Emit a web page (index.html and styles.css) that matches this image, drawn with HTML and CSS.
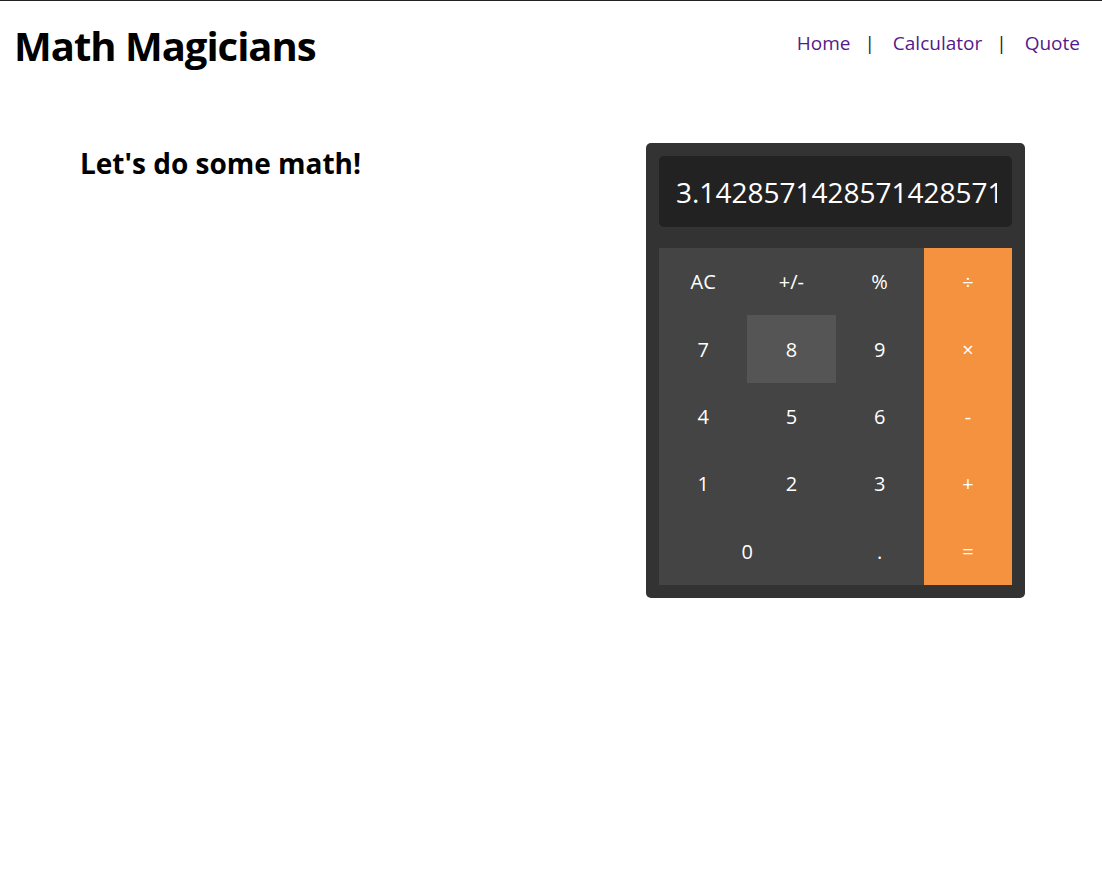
FILE: index.html
```html
<!DOCTYPE html>
<html lang="en">
<head>
<meta charset="utf-8">
<title>Math Magicians</title>
<link rel="stylesheet" href="styles.css">
</head>
<body>
<header class="header">
  <h1 class="logo">Math Magicians</h1>
  <nav class="nav">
    <a class="nav-link" href="#">Home</a>
    <span class="sep">|</span>
    <a class="nav-link" href="#">Calculator</a>
    <span class="sep">|</span>
    <a class="nav-link" href="#">Quote</a>
  </nav>
</header>
<main class="main">
  <h2 class="title">Let's do some math!</h2>
  <div class="calc">
    <div class="display"><span class="display-text">3.142857142857142857142857</span></div>
    <div class="keys">
      <div class="key">AC</div>
      <div class="key">+/-</div>
      <div class="key">%</div>
      <div class="key op">÷</div>
      <div class="key">7</div>
      <div class="key hover">8</div>
      <div class="key">9</div>
      <div class="key op">×</div>
      <div class="key">4</div>
      <div class="key">5</div>
      <div class="key">6</div>
      <div class="key op">-</div>
      <div class="key">1</div>
      <div class="key">2</div>
      <div class="key">3</div>
      <div class="key op">+</div>
      <div class="key zero">0</div>
      <div class="key">.</div>
      <div class="key op">=</div>
    </div>
  </div>
</main>
</body>
</html>
```

FILE: styles.css
```css
html, body {
  margin: 0;
  padding: 0;
}
body {
  font-family: "Open Sans", "Noto Sans", sans-serif;
  background: #fff;
  color: #000;
  border-top: 1px solid #222;
  min-height: 870px;
  box-sizing: border-box;
}
.header {
  display: flex;
  justify-content: space-between;
  align-items: flex-start;
  padding: 21px 22px 0 14px;
}
.logo {
  margin: 0;
  font-size: 40px;
  font-weight: 700;
  letter-spacing: -1px;
  line-height: 48px;
}
.nav {
  display: flex;
  align-items: center;
  font-size: 19px;
  line-height: 26px;
  margin-top: 8px;
}
.nav-link {
  color: #551a8b;
  text-decoration: none;
}
.sep {
  color: #222;
  margin: 0 18px 0 14px;
}
.main {
  display: flex;
  align-items: flex-start;
  padding: 73px 0 0 80px;
}
.title {
  margin: 2px 0 0 0;
  font-size: 28px;
  font-weight: 700;
  line-height: 36px;
  width: 566px;
}
.calc {
  width: 353px;
  background: #333;
  border-radius: 5px;
  padding: 13px;
}
.display {
  height: 71px;
  background: #222;
  border-radius: 5px;
  display: flex;
  align-items: center;
  padding: 0 15px 0 17px;
  overflow: hidden;
  margin-bottom: 21px;
}
.display-text {
  color: #fff;
  font-size: 28px;
  white-space: nowrap;
  overflow: hidden;
  display: block;
  width: 100%;
}
.keys {
  display: grid;
  grid-template-columns: repeat(4, 1fr);
  grid-auto-rows: 67.4px;
  background: #444;
}
.key {
  display: flex;
  align-items: center;
  justify-content: center;
  color: #fff;
  font-size: 20px;
  background: #444;
}
.key.hover {
  background: #555;
}
.key.op {
  background: #f4923f;
}
.key.zero {
  grid-column: span 2;
}
```
